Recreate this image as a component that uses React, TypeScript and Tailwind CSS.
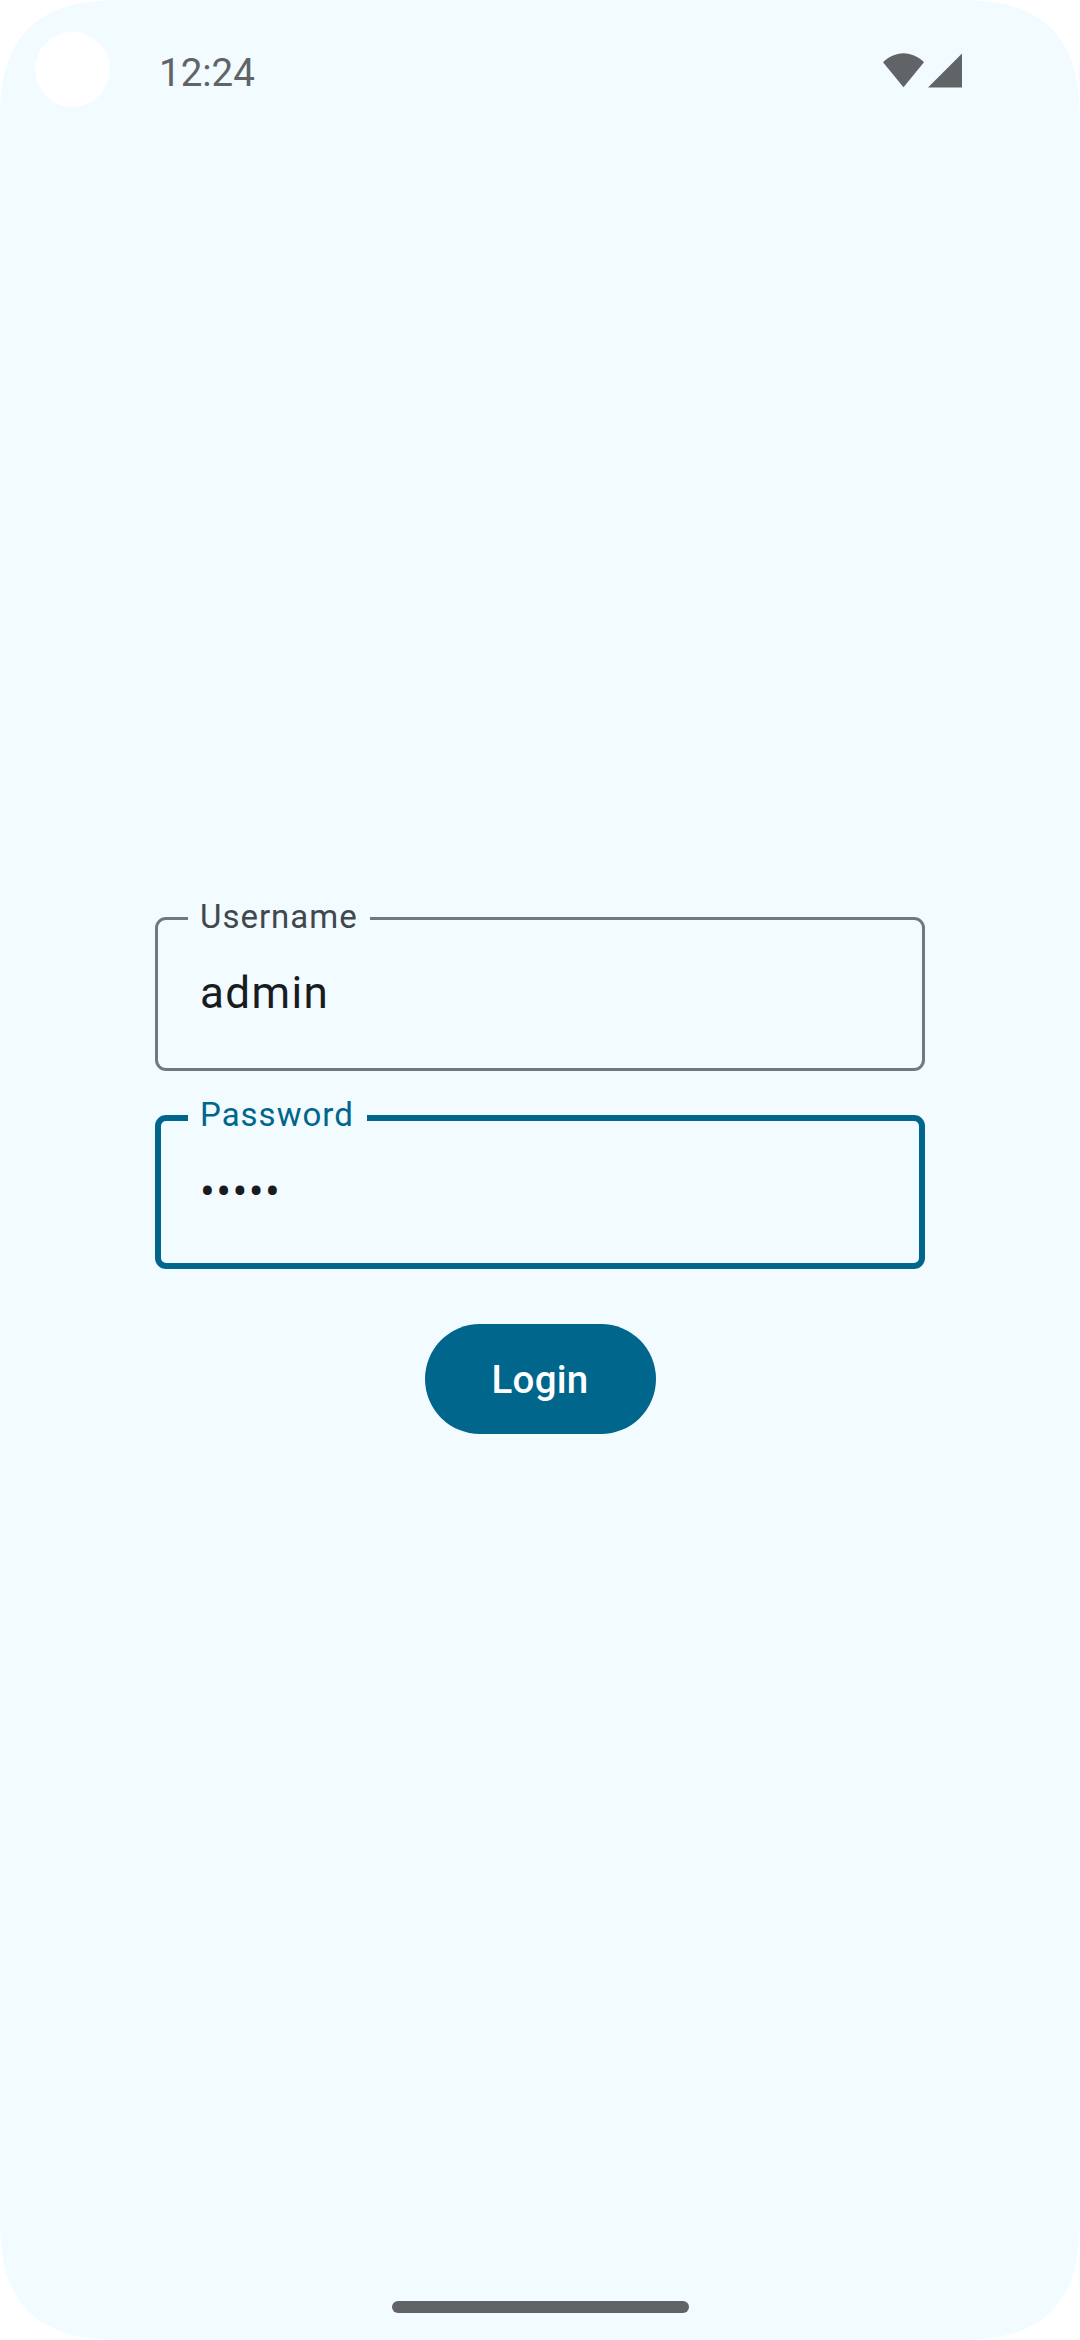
const corners = [
  "left-0 top-0",
  "right-0 top-0 rotate-90",
  "right-0 bottom-0 rotate-180",
  "left-0 bottom-0 -rotate-90",
];

function ScreenCorner({ place }: { place: string }) {
  return (
    <svg viewBox="0 0 120 120" className={`absolute size-[120px] fill-white ${place}`} aria-hidden="true">
      <path d="M0 0V120C0 36 36 0 120 0Z" />
    </svg>
  );
}

function StatusBar() {
  return (
    <header className="flex h-[139px] shrink-0 items-start pl-[35px] pr-[118px] text-[#616466]">
      <div className="mt-8 size-[75px] rounded-full bg-white" />
      <span className="ml-[49px] mt-[50px] text-[38.5px] leading-[46px]">12:24</span>
      <div className="ml-auto mt-[53px] flex gap-1">
        <svg viewBox="0 0 41 35" className="h-[35px] w-[41px] fill-[#616466]" aria-hidden="true">
          <path d="M20.5 34.3L0 9.3C5.5 3.7 12.8.2 20.5.2S35.500 3.700 41 9.300Z" />
        </svg>
        <svg viewBox="0 0 34 35" className="h-[35px] w-[34px] fill-[#616466]" aria-hidden="true">
          <path d="M0 34.500L34 .5V34.500Z" />
        </svg>
      </div>
    </header>
  );
}

function Field({ label, value, focused = false }: { label: string; value: string; focused?: boolean }) {
  return (
    <div
      className={`relative flex h-[154px] w-[770px] items-center rounded-[11px] ${
        focused ? "border-[6px] border-[#00668b] pl-[39px]" : "border-[3px] border-[#71787e] pb-0.5 pl-[42px]"
      }`}
    >
      <span
        className={`absolute bg-[#f2fbff] pl-3 text-[33px] leading-[44px] tracking-[1px] ${
          focused ? "-top-[28px] left-[27px] w-[179px] text-[#00668b]" : "-top-[25px] left-[30px] w-[182px] text-[#41484d]"
        }`}
      >
        {label}
      </span>
      <span className="text-[44px] leading-[66px] tracking-[1.375px] text-[#191c1e]">{value}</span>
    </div>
  );
}

export default function App() {
  return (
    <div className="relative flex h-[2340px] w-[1080px] flex-col overflow-hidden bg-[#f2fbff] font-['Roboto',sans-serif]">
      <StatusBar />
      <main className="flex flex-1 flex-col items-center pt-[778px]">
        <Field label="Username" value="admin" />
        <div className="h-11" />
        <Field label="Password" value="•••••" focused />
        <button className="mt-[55px] h-[110px] w-[231px] rounded-full bg-[#00668b] text-[38.5px] font-medium leading-[55px] tracking-[0.275px] text-white">
          Login
        </button>
      </main>
      <footer className="flex h-[39px] justify-center">
        <div className="h-[12px] w-[297px] rounded-full bg-[#616466]" />
      </footer>
      {corners.map((place) => (
        <ScreenCorner key={place} place={place} />
      ))}
    </div>
  );
}
